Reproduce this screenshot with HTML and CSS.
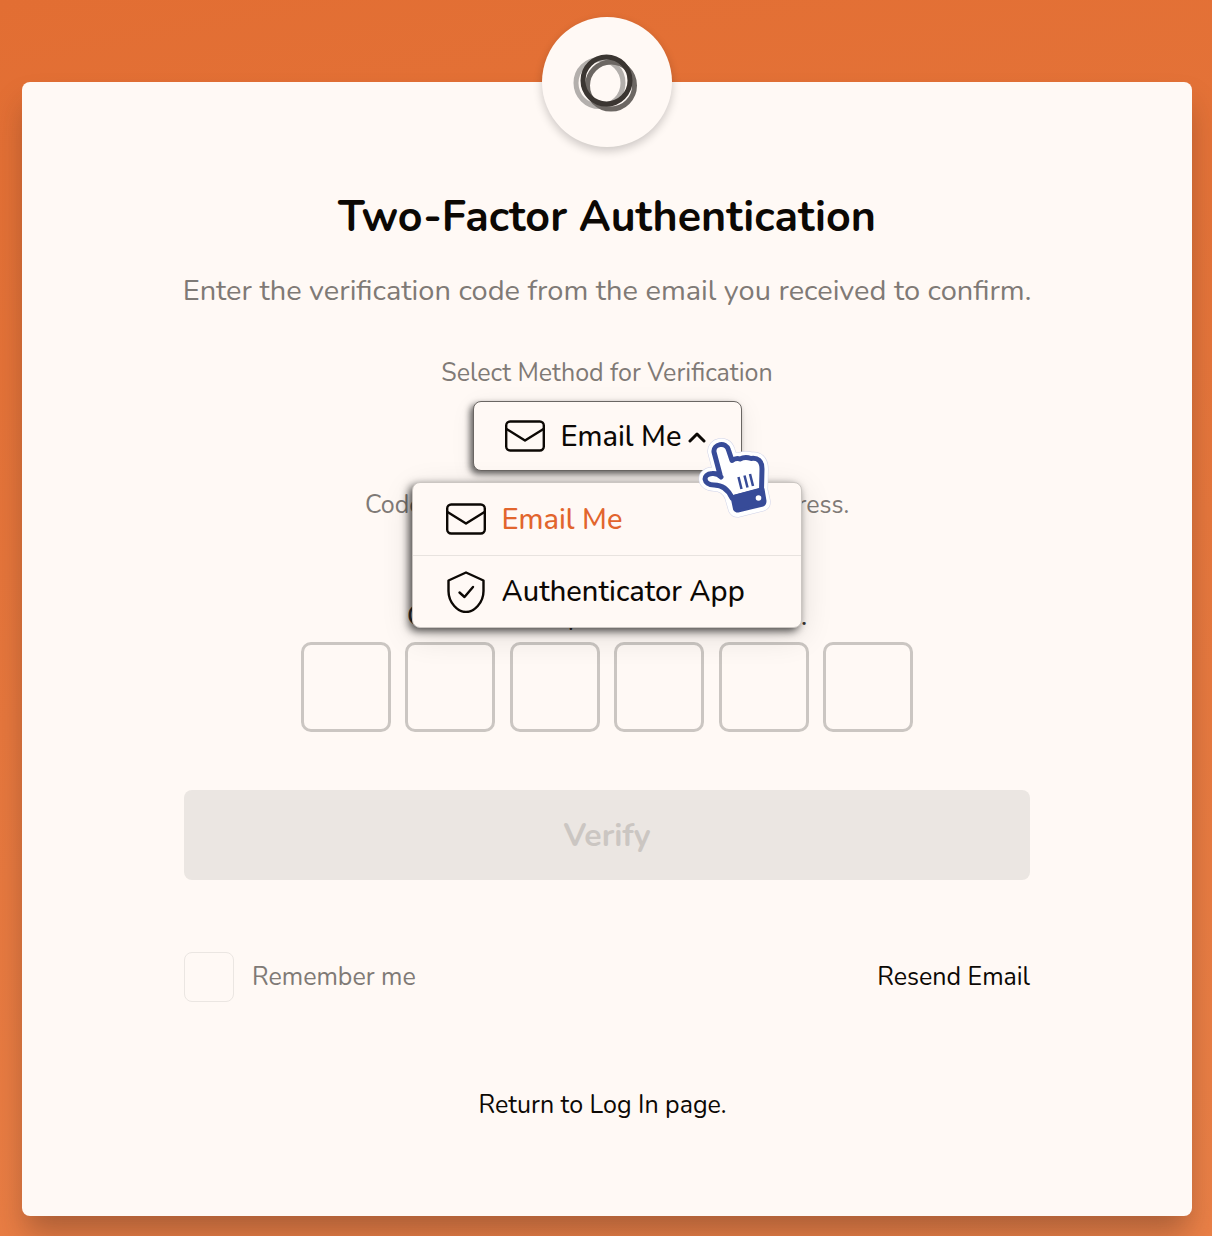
FILE: index.html
```html
<!DOCTYPE html>
<html lang="en">
<head>
<meta charset="utf-8">
<meta name="viewport" content="width=device-width, initial-scale=1">
<title>Two-Factor Authentication</title>
<link rel="stylesheet" href="styles.css">
</head>
<body>
<svg class="sprite" aria-hidden="true">
  <symbol id="icon-mail" viewBox="0 0 40 32">
    <rect x="1.200" y="1.500" width="37.600" height="29" rx="4"/>
    <path d="M1.500 9 L20 20.500 L38.500 9"/>
  </symbol>
  <symbol id="icon-shield" viewBox="0 0 40 42">
    <path d="M20 1.500 L37.500 9.500 V20 C37.500 32 28 41 20 41 S2.500 32 2.500 20 V9.500 Z"/>
    <path d="M13.500 21.500 L18.500 26 L27 16"/>
  </symbol>
</svg>
<main class="card">
  <div class="logo">
    <svg class="logo-mark" viewBox="0 0 66 60" role="img" aria-label="Logo">
      <circle cx="25.500" cy="31" r="23.500" stroke="#b3afac"/>
      <circle cx="37" cy="33.500" r="23.500" stroke="#6c6763"/>
      <circle cx="32.500" cy="28.500" r="23.500" stroke="#3b3632"/>
    </svg>
  </div>
  <h1 class="title">Two-Factor Authentication</h1>
  <p class="subtitle">Enter the verification code from the email you received to confirm.</p>

  <form class="form">
    <label class="note" for="method">Select Method for Verification</label>
    <div class="method">
      <svg class="method-icon icon icon-mail" aria-hidden="true"><use href="#icon-mail"/></svg>
      <select class="method-select" id="method">
        <option>Email Me</option>
        <option>Authenticator App</option>
      </select>
      <svg class="method-arrow" viewBox="0 0 18 12" aria-hidden="true"><path d="M2 10 L9 3 L16 10"/></svg>
      <div class="menu">
        <button class="menu-item menu-item-active" type="button">
          <svg class="icon icon-mail" aria-hidden="true"><use href="#icon-mail"/></svg>Email Me
        </button>
        <button class="menu-item" type="button">
          <svg class="icon icon-shield" aria-hidden="true"><use href="#icon-shield"/></svg>Authenticator App
        </button>
      </div>
      <svg class="hand" viewBox="0 0 72 78" aria-hidden="true">
        <defs>
          <path id="hand-shape" d="M20 35.500 L14 13 C13 5 26 2 28.500 11 L32 21.500 Q36 18.500 40 20 Q45 17.500 51 19.500 C58 18.500 62 22 62 30 L61.500 51 L64 62 Q64.500 65 62 66 L38 72 Q35.500 72 34.500 70 L31 58 C28 50 22 46 14 46 C3 46 2 35 12 34.500 Q18 34 21 38"/>
        </defs>
        <use class="hand-edge" href="#hand-shape"/>
        <use class="hand-trim" href="#hand-shape"/>
        <path class="hand-body" d="M20 35.500 L14 13 C13 5 26 2 28.500 11 L32 21.500 Q36 18.500 40 20 Q45 17.500 51 19.500 C58 18.500 62 22 62 30 L61.500 51 L32 59 C28 50 22 46 14 46 C3 46 2 35 12 34.500 Q18 34 21 38"/>
        <path class="hand-cuff" d="M32 58 L63 50 L65 62 Q65 65 63 66 L38 72 Q35.500 72 34.500 70 Z"/>
        <circle class="hand-button" cx="58.500" cy="59" r="2.800"/>
        <path class="hand-lines" d="M38.500 38 L41.500 50 M44.500 36.500 L47.500 48.500 M50 35 L53 47"/>
      </svg>
    </div>
    <p class="note sent">Code has been sent to your e-mail address.</p>
    <p class="expiry">Code will expire in 10 minutes.</p>

    <div class="code">
      <input class="digit" type="text" inputmode="numeric" maxlength="1" aria-label="Digit 1">
      <input class="digit" type="text" inputmode="numeric" maxlength="1" aria-label="Digit 2">
      <input class="digit" type="text" inputmode="numeric" maxlength="1" aria-label="Digit 3">
      <input class="digit" type="text" inputmode="numeric" maxlength="1" aria-label="Digit 4">
      <input class="digit" type="text" inputmode="numeric" maxlength="1" aria-label="Digit 5">
      <input class="digit" type="text" inputmode="numeric" maxlength="1" aria-label="Digit 6">
    </div>

    <button class="verify" type="submit" disabled>Verify</button>

    <div class="options">
      <label class="remember"><input class="remember-box" type="checkbox">Remember me</label>
      <a class="link" href="#resend">Resend Email</a>
    </div>
  </form>
  <a class="link return" href="#login">Return to Log In page.</a>
</main>
</body>
</html>
```
FILE: styles.css
```css
* {
  box-sizing: border-box;
}

body {
  margin: 0;
  min-height: 100vh;
  padding: 82px 20px 20px 22px;
  background: linear-gradient(170deg, #e26e33, #ea8047);
  color: #0c0804;
  font-family: Nunito, "Noto Sans", sans-serif;
}

button,
input,
select {
  font-family: inherit;
  color: inherit;
}

.sprite {
  position: absolute;
  width: 0;
  height: 0;
}

.card {
  display: flex;
  flex-direction: column;
  align-items: center;
  padding: 0 24px 95px;
  border-radius: 8px;
  background: #fff9f5;
  box-shadow: 0 20px 30px -4px rgba(60, 40, 30, 0.36);
}

.logo {
  display: flex;
  align-items: center;
  justify-content: center;
  width: 130px;
  height: 130px;
  margin-top: -65px;
  border-radius: 50%;
  background: #fff9f5;
  box-shadow: 0 4px 10px rgba(0, 0, 0, 0.2);
}

.logo-mark {
  width: 66px;
  height: 60px;
  overflow: visible;
  fill: none;
  stroke-width: 5;
}

.title {
  margin: 40px 0 0;
  font-size: 43px;
  line-height: 60px;
  font-weight: 700;
  text-align: center;
}

.subtitle {
  margin: 24px 0 0;
  color: #7f7a76;
  font-size: 29px;
  line-height: 40px;
  text-align: center;
}

.form {
  display: flex;
  flex-direction: column;
  align-items: center;
  width: 100%;
  max-width: 846px;
  margin-top: 46px;
}

.note {
  margin: 0;
  color: #7f7a76;
  font-size: 25px;
  line-height: 32px;
  text-align: center;
}

.icon {
  flex: none;
  width: 40px;
  fill: none;
  stroke: #0c0804;
  stroke-width: 2.4;
  stroke-linecap: round;
  stroke-linejoin: round;
}

.icon-mail {
  height: 32px;
}

.icon-shield {
  height: 42px;
}

.method {
  position: relative;
  width: 269px;
  margin-top: 12px;
}

.method-select {
  display: block;
  width: 100%;
  height: 70px;
  padding: 0 48px 0 87px;
  appearance: none;
  border: 1px solid #6a6663;
  border-radius: 8px;
  background: #fff9f5;
  box-shadow: -3px 3px 6px rgba(0, 0, 0, 0.6), 0 6px 24px rgba(0, 0, 0, 0.08);
  font-size: 29px;
  font-weight: 500;
}

.method-icon {
  position: absolute;
  top: 19px;
  left: 32px;
}

.method-arrow {
  position: absolute;
  top: 30px;
  right: 36px;
  width: 18px;
  height: 12px;
  fill: none;
  stroke: #0c0804;
  stroke-width: 3;
  stroke-linecap: round;
  stroke-linejoin: round;
}

.menu {
  position: absolute;
  z-index: 1;
  top: 81px;
  left: -61px;
  width: 390px;
  border: 1px solid #cbc6c2;
  border-radius: 8px;
  background: #fff9f5;
  box-shadow: -3px 3px 8px rgba(0, 0, 0, 0.7), 0 8px 32px rgba(0, 0, 0, 0.12);
}

.menu-item {
  display: flex;
  align-items: center;
  gap: 16px;
  width: 100%;
  height: 72px;
  padding: 0 33px;
  border: 0;
  background: none;
  font-size: 29px;
  font-weight: 500;
}

.menu-item + .menu-item {
  border-top: 1px solid #e8e3df;
}

.menu-item-active {
  color: #e2652d;
}

.hand {
  position: absolute;
  z-index: 2;
  top: 38px;
  left: 227px;
  width: 72px;
  height: 78px;
  overflow: visible;
  stroke-linejoin: round;
  stroke-linecap: round;
}

.hand-edge {
  fill: #d0d3e8;
  stroke: #d0d3e8;
  stroke-width: 13;
}

.hand-trim {
  fill: #fff;
  stroke: #fff;
  stroke-width: 12;
}

.hand-body {
  fill: #fff;
  stroke: #374b98;
  stroke-width: 5;
}

.hand-cuff {
  fill: #374b98;
  stroke: #374b98;
  stroke-width: 3;
}

.hand-button {
  fill: #fff;
}

.hand-lines {
  stroke: #374b98;
  stroke-width: 2.5;
  stroke-linecap: butt;
}

.sent {
  margin-top: 18px;
}

.expiry {
  margin: 75px 0 0;
  color: #3b3632;
  font-size: 29px;
  line-height: 40px;
}

.code {
  display: flex;
  justify-content: space-between;
  width: 100%;
  max-width: 612px;
  margin-top: 6px;
}

.digit {
  width: 90px;
  height: 90px;
  padding: 0;
  border: 3px solid #cbc6c2;
  border-radius: 10px;
  background: transparent;
  font-size: 43px;
  text-align: center;
}

.verify {
  width: 100%;
  height: 90px;
  margin-top: 58px;
  border: 0;
  border-radius: 8px;
  background: #ebe6e2;
  color: #cbc6c2;
  font-size: 32px;
  font-weight: 700;
}

.options {
  display: flex;
  align-items: center;
  justify-content: space-between;
  width: 100%;
  margin-top: 72px;
}

.remember {
  display: flex;
  align-items: center;
  gap: 18px;
  color: #7f7a76;
  font-size: 25px;
  line-height: 32px;
}

.remember-box {
  width: 50px;
  height: 50px;
  margin: 0;
  appearance: none;
  border: 1px solid #ebe6e2;
  border-radius: 8px;
}

.link {
  color: #0c0804;
  font-size: 25px;
  line-height: 32px;
  text-decoration: none;
}

.return {
  margin: 87px 9px 0 0;
}
```
